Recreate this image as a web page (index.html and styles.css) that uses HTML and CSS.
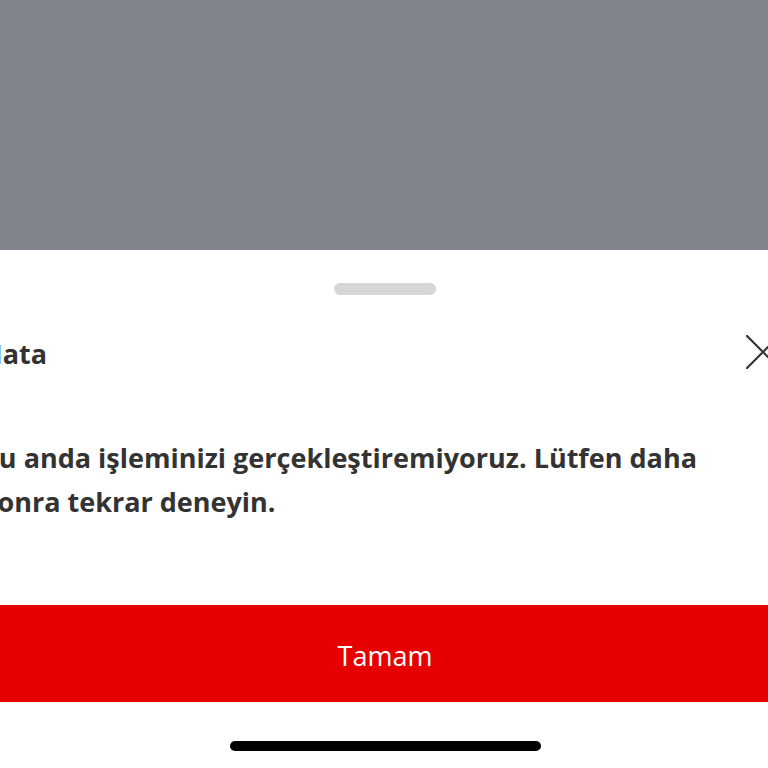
FILE: index.html
```html
<!DOCTYPE html>
<html lang="tr">
<head>
<meta charset="utf-8">
<link rel="stylesheet" href="styles.css">
</head>
<body>
<div class="page">
  <div class="overlay"></div>
  <div class="sheet">
    <div class="handle"></div>
    <div class="content">
      <div class="header">
        <h1 class="title">Hata</h1>
        <button class="close" aria-label="Kapat">
          <svg width="34" height="34" viewBox="0 0 34 34"><path d="M1 1 L33 33 M33 1 L1 33" stroke="#333" stroke-width="2.2" stroke-linecap="round" fill="none"/></svg>
        </button>
      </div>
      <p class="message">Şu anda işleminizi gerçekleştiremiyoruz. Lütfen daha sonra tekrar deneyin.</p>
    </div>
    <button class="primary">Tamam</button>
    <div class="home-indicator"></div>
  </div>
</div>
</body>
</html>
```
FILE: styles.css
```css
html, body {
  margin: 0;
  padding: 0;
  overflow: hidden;
}
body {
  width: 768px;
  height: 768px;
  font-family: "Open Sans", "Lato", sans-serif;
  color: #333;
}
.page {
  height: 768px;
  display: flex;
  flex-direction: column;
}
.overlay {
  height: 250px;
  background: #7f838c;
  flex: none;
}
.sheet {
  flex: 1;
  background: #fff;
  display: flex;
  flex-direction: column;
}
.handle {
  width: 102px;
  height: 12px;
  border-radius: 6px;
  background: #d6d6d6;
  margin: 33px auto 0 334px;
}
.content {
  margin: 0 -20px 0 -16px;
}
.header {
  display: flex;
  align-items: center;
  justify-content: space-between;
  height: 40px;
  margin-top: 37px;
}
.title {
  margin: 0 0 0 -2px;
  font-size: 27px;
  font-weight: 700;
  line-height: 40px;
  position: relative;
  top: 2px;
}
.close {
  border: 0;
  background: none;
  padding: 0;
  width: 34px;
  height: 34px;
  margin-right: 8px;
  display: flex;
}
.message {
  margin: 64px 0 0;
  font-size: 27px;
  font-weight: 700;
  line-height: 44px;
  width: 740px;
}
.primary {
  margin-top: 81px;
  height: 97px;
  border: 0;
  background: #e60000;
  color: #fff;
  font-family: "Open Sans", "Lato", sans-serif;
  font-size: 27px;
  font-weight: 400;
  padding: 4px 0 0 2px;
  flex: none;
}
.home-indicator {
  width: 311px;
  height: 10px;
  border-radius: 5px;
  background: #000;
  margin: 39px 0 0 230px;
}
```
